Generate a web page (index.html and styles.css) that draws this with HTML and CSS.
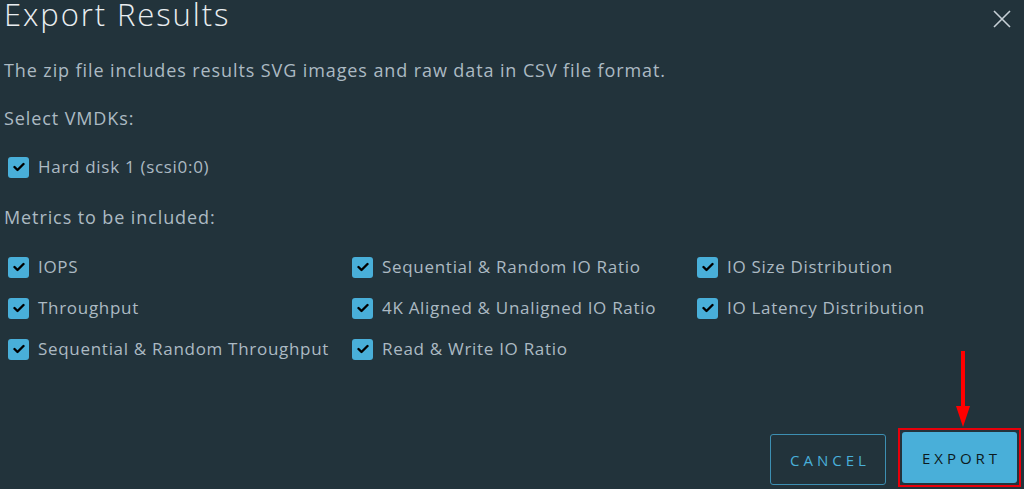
FILE: index.html
```html
<!DOCTYPE html>
<html>
<head>
<meta charset="utf-8">
<link rel="stylesheet" href="styles.css">
</head>
<body>
<div class="modal">
  <div class="header">
    <h1 class="title">Export Results</h1>
    <button class="close" aria-label="Close">
      <svg width="20" height="20" viewBox="0 0 20 20"><path d="M2 2 L18 18 M18 2 L2 18" stroke="#c7d0d6" stroke-width="1.6" fill="none"/></svg>
    </button>
  </div>
  <p class="desc">The zip file includes results SVG images and raw data in CSV file format.</p>
  <p class="label">Select VMDKs:</p>
  <div class="vmdks">
    <label class="check"><span class="box"><svg width="12" height="10" viewBox="0 0 12 10"><path d="M1.5 5 L4.5 8 L10.5 2" stroke="#000" stroke-width="2.4" fill="none" stroke-linecap="round" stroke-linejoin="round"/></svg></span><span class="ctext">Hard disk 1 (scsi0:0)</span></label>
  </div>
  <p class="label">Metrics to be included:</p>
  <div class="metrics">
    <label class="check"><span class="box"><svg width="12" height="10" viewBox="0 0 12 10"><path d="M1.5 5 L4.5 8 L10.5 2" stroke="#000" stroke-width="2.4" fill="none" stroke-linecap="round" stroke-linejoin="round"/></svg></span><span class="ctext">IOPS</span></label>
    <label class="check"><span class="box"><svg width="12" height="10" viewBox="0 0 12 10"><path d="M1.5 5 L4.5 8 L10.5 2" stroke="#000" stroke-width="2.4" fill="none" stroke-linecap="round" stroke-linejoin="round"/></svg></span><span class="ctext">Sequential &amp; Random IO Ratio</span></label>
    <label class="check"><span class="box"><svg width="12" height="10" viewBox="0 0 12 10"><path d="M1.5 5 L4.5 8 L10.5 2" stroke="#000" stroke-width="2.4" fill="none" stroke-linecap="round" stroke-linejoin="round"/></svg></span><span class="ctext">IO Size Distribution</span></label>
    <label class="check"><span class="box"><svg width="12" height="10" viewBox="0 0 12 10"><path d="M1.5 5 L4.5 8 L10.5 2" stroke="#000" stroke-width="2.4" fill="none" stroke-linecap="round" stroke-linejoin="round"/></svg></span><span class="ctext">Throughput</span></label>
    <label class="check"><span class="box"><svg width="12" height="10" viewBox="0 0 12 10"><path d="M1.5 5 L4.5 8 L10.5 2" stroke="#000" stroke-width="2.4" fill="none" stroke-linecap="round" stroke-linejoin="round"/></svg></span><span class="ctext">4K Aligned &amp; Unaligned IO Ratio</span></label>
    <label class="check"><span class="box"><svg width="12" height="10" viewBox="0 0 12 10"><path d="M1.5 5 L4.5 8 L10.5 2" stroke="#000" stroke-width="2.4" fill="none" stroke-linecap="round" stroke-linejoin="round"/></svg></span><span class="ctext">IO Latency Distribution</span></label>
    <label class="check"><span class="box"><svg width="12" height="10" viewBox="0 0 12 10"><path d="M1.5 5 L4.5 8 L10.5 2" stroke="#000" stroke-width="2.4" fill="none" stroke-linecap="round" stroke-linejoin="round"/></svg></span><span class="ctext">Sequential &amp; Random Throughput</span></label>
    <label class="check"><span class="box"><svg width="12" height="10" viewBox="0 0 12 10"><path d="M1.5 5 L4.5 8 L10.5 2" stroke="#000" stroke-width="2.4" fill="none" stroke-linecap="round" stroke-linejoin="round"/></svg></span><span class="ctext">Read &amp; Write IO Ratio</span></label>
  </div>
  <div class="footer">
    <button class="btn btn-outline">CANCEL</button>
    <div class="highlight">
      <button class="btn btn-primary">EXPORT</button>
      <svg class="arrow" width="16" height="80" viewBox="0 0 16 80"><path d="M8 0 V56" stroke="#ff0000" stroke-width="4"/><path d="M1 55 L15 55 L8 76 Z" fill="#ff0000"/></svg>
    </div>
  </div>
</div>
</body>
</html>
```

FILE: styles.css
```css
* { box-sizing: border-box; }
html, body { margin: 0; padding: 0; }
body {
  width: 1024px;
  height: 489px;
  background: #22333b;
  font-family: "Open Sans", "DejaVu Sans", sans-serif;
  color: #acbac3;
  overflow: hidden;
}
.modal {
  display: flex;
  flex-direction: column;
  height: 489px;
  padding: 0 0 0 4px;
}
.header {
  display: flex;
  justify-content: space-between;
  align-items: flex-start;
  height: 36px;
}
.title {
  margin: 0;
  font-size: 31px;
  font-weight: 300;
  line-height: 26px;
  padding-top: 1px;
  color: #e9edf0;
  letter-spacing: 1.9px;
}
.close {
  background: none;
  border: 0;
  padding: 0;
  margin: 9px 12px 0 0;
  width: 20px;
  height: 20px;
  display: flex;
}
.desc, .label {
  margin: 0;
  font-size: 18px;
  line-height: 20px;
  letter-spacing: 0.9px;
}
.desc { margin-top: 24px; }
.label { margin-top: 28px; }
.vmdks { margin-top: 29px; }
.check {
  display: flex;
  align-items: center;
  gap: 9px;
  height: 20px;
  font-size: 17px;
  line-height: 20px;
  letter-spacing: 0.7px;
}
.box {
  width: 21px;
  height: 21px;
  margin-left: 4px;
  border-radius: 3px;
  background: #49afd9;
  display: flex;
  align-items: center;
  justify-content: center;
  flex: none;
}
.vmdks + .label { margin-top: 30px; }
.metrics {
  margin-top: 30px;
  display: grid;
  grid-template-columns: 344px 345px 300px;
  row-gap: 21px;
}
.footer {
  margin-top: auto;
  display: flex;
  justify-content: flex-end;
  align-items: flex-end;
  gap: 12px;
  padding: 0 3px 2px 0;
}
.btn {
  font-family: "Open Sans", "DejaVu Sans", sans-serif;
  font-size: 15px;
  letter-spacing: 4px;
  text-indent: 4px;
  height: 51px;
  border-radius: 3px;
  font-weight: 500;
  cursor: pointer;
}
.btn-outline {
  width: 116px;
  margin-bottom: 2px;
  background: transparent;
  color: #49afd9;
  border: 1px solid #3d8fb2;
}
.highlight {
  position: relative;
  border: 2px solid #e8000b;
  padding: 2px;
}
.btn-primary {
  display: block;
  width: 115px;
  background: #49afd9;
  color: #0d1a20;
  border: 0;
}
.arrow {
  position: absolute;
  left: 55px;
  top: -79px;
}
```
